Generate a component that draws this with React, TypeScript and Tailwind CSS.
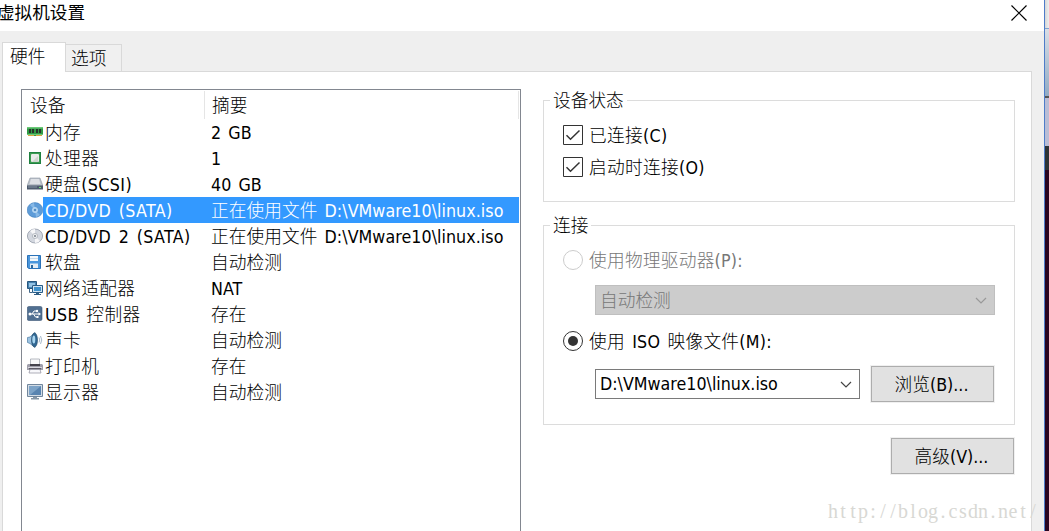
import React from "react";

const stack = "font-['DejaVu_Sans_Condensed','DejaVu_Sans','Noto_Sans_CJK_SC',sans-serif] font-light";

const icons: Record<string, React.ReactNode> = {
  memory: (
    <>
      <path d="M0 3h16v8h-1v1H1v-1H0z" fill="#2f9a45" />
      <path d="M0 3h16v1.500H0z" fill="#6cc878" />
      <path d="M2 5h2v4H2zM5 5h2v4H5zM9 5h2v4H9zM12 5h2v4h-2z" fill="#26332a" />
      <path d="M0 10h16v1H0z" fill="#6cc878" />
      <path d="M1 11h6v1H1zM9 11h6v1H9z" fill="#d9a441" />
    </>
  ),
  cpu: (
    <>
      <rect x="2" y="2" width="12" height="12" fill="#1f8140" />
      <rect x="3" y="3" width="10" height="10" fill="#3d9c52" />
      <rect x="4" y="4" width="8" height="8" rx="1" fill="#e9ebe9" />
      <path d="M11 6v6H5z" fill="#cfd4cf" />
    </>
  ),
  disk: (
    <>
      <path d="M3 2h10l3 8H0z" fill="#b9bfc8" stroke="#8f98a4" strokeWidth=".6" />
      <path d="M4 3h8l1.500 5h-11z" fill="#dde0e5" />
      <path d="M0 9.500h16v4H0z" fill="#4d5b6e" />
      <path d="M1 10.500h9v1H1z" fill="#8996a7" />
      <path d="M12 11h2v1h-2z" fill="#74df70" />
    </>
  ),
  discBlue: (
    <>
      <ellipse cx="8" cy="8" rx="7.900" ry="7.400" fill="#5e9cd8" stroke="#3979b8" strokeWidth=".5" />
      <path d="M8 8L3 3A8 7 0 0 1 7 1zM8 8l5 5A8 7 0 0 1 9 15z" fill="#86b8e6" />
      <circle cx="8" cy="8" r="2.600" fill="#a4cbee" stroke="#d3e7f7" strokeWidth=".6" />
      <circle cx="8" cy="8" r="1" fill="#3b79b2" />
    </>
  ),
  disc: (
    <>
      <ellipse cx="8" cy="8" rx="7.600" ry="7" fill="#d3d7df" stroke="#858e9c" strokeWidth=".7" />
      <path d="M8 8L3 3A8 7 0 0 1 8 1zM8 8l5 5A8 7 0 0 1 8 15z" fill="#f6f6f8" />
      <circle cx="8" cy="8" r="2.600" fill="#eceef1" stroke="#9ba1ab" strokeWidth=".6" />
      <circle cx="8" cy="8" r="1" fill="#777e88" />
    </>
  ),
  floppy: (
    <>
      <path d="M.5 1.500h13v13H2l-1.500-1z" fill="#4a96dc" stroke="#2b72b8" />
      <path d="M3 2h8v5H3z" fill="#f4f8fb" />
      <path d="M3 4h8v1H3z" fill="#c5d9ea" />
      <path d="M3 9.500h8V14H3z" fill="#e5edf4" />
      <path d="M4 11h2v3H4z" fill="#2867a0" />
    </>
  ),
  network: (
    <>
      <path d="M.5 1.500h9v7h-9z" fill="#4681af" stroke="#26567e" />
      <path d="M2 3h6v4H2z" fill="#94c3e4" />
      <path d="M2.500 8.500v4H5" fill="none" stroke="#426789" />
      <path d="M5 5h11v8H5z" fill="#f3f8fc" />
      <path d="M5.500 5.500h10v7h-10z" fill="#cfe3f2" stroke="#285c87" />
      <path d="M7 7h7v4H7z" fill="#3e91cc" />
      <path d="M9 13h3v1h2v1H7v-1h2z" fill="#315e83" />
    </>
  ),
  usb: (
    <>
      <rect x=".3" y=".5" width="14.700" height="14" rx="1.500" fill="#506f91" stroke="#3b5674" strokeWidth=".6" />
      <path d="M2 8h10M5 8l2-3h3M6.500 8l2 3h2" fill="none" stroke="#fff" strokeWidth="1" />
      <circle cx="3" cy="8" r="1.500" fill="#fff" />
      <circle cx="10" cy="5" r="1.200" fill="#fff" />
      <path d="M11.500 6.300L14 8l-2.500 1.700zM9.500 10h2v2h-2z" fill="#fff" />
    </>
  ),
  sound: (
    <>
      <path d="M.5 5.500L3 5l5-4.500v15L3 11.500l-2.500-1z" fill="#9cc3e2" stroke="#4b7ba3" strokeWidth=".7" />
      <ellipse cx="7.500" cy="8" rx="3" ry="7" fill="#326894" stroke="#214865" strokeWidth=".6" />
      <ellipse cx="6.800" cy="7.500" rx="1.500" ry="4" fill="#a9d6f0" />
      <path d="M12 5.500q1.500 2.500 0 5M13.500 4q2.500 4 0 8" fill="none" stroke="#8ea6bd" strokeWidth=".8" />
    </>
  ),
  printer: (
    <>
      <path d="M3.500 1h9v6h-9z" fill="#f8f8fa" stroke="#9a9da6" strokeWidth=".7" />
      <path d="M1 6h14l1 1v5H0V7z" fill="#a09fab" />
      <path d="M3 6h10v2H3z" fill="#45434d" />
      <path d="M1 9h14v1H1z" fill="#d9d8e0" />
      <path d="M2 10h12v1.500H2z" fill="#5c5a66" />
      <path d="M3 11.500h10l1 3.500H2z" fill="#f8f8fb" stroke="#8d8d9b" strokeWidth=".7" />
    </>
  ),
  monitor: (
    <>
      <path d="M.5.500h15v12H.5z" fill="#d3dce5" stroke="#71869c" />
      <path d="M2 2h12v9H2z" fill="#5984b0" />
      <path d="M2 2h12L3 11H2z" fill="#7da3c7" />
      <path d="M6 13h4v1h2v1.500H4V14h2z" fill="#8596a6" />
    </>
  ),
};

const devices = [
  { icon: "memory", name: "内存", summary: "2 GB" },
  { icon: "cpu", name: "处理器", summary: "1" },
  { icon: "disk", name: "硬盘(SCSI)", summary: "40 GB" },
  { icon: "discBlue", name: "CD/DVD (SATA)", summary: "正在使用文件 D:\\VMware10\\linux.iso", selected: true },
  { icon: "disc", name: "CD/DVD 2 (SATA)", summary: "正在使用文件 D:\\VMware10\\linux.iso" },
  { icon: "floppy", name: "软盘", summary: "自动检测" },
  { icon: "network", name: "网络适配器", summary: "NAT" },
  { icon: "usb", name: "USB 控制器", summary: "存在" },
  { icon: "sound", name: "声卡", summary: "自动检测" },
  { icon: "printer", name: "打印机", summary: "存在" },
  { icon: "monitor", name: "显示器", summary: "自动检测" },
];

function DeviceList() {
  return (
    <section className="h-[460px] w-[500px] shrink-0 border border-[#828790] bg-white">
      <div className="mt-px mr-px flex h-[28px] leading-[31px]">
        <div className="w-[183px] border-r border-[#e5e5e5] pl-[8px]">设备</div>
        <div className="flex-1 border-r border-[#e5e5e5] pl-[7px]">摘要</div>
      </div>
      {devices.map((d) => (
        <div key={d.name} className="mr-px flex h-[26px] items-center leading-[28px]">
          <svg className="ml-[5px] size-4 shrink-0" viewBox="0 0 16 16">{icons[d.icon]}</svg>
          <div className={d.selected ? "flex h-[26px] flex-1 bg-[#3399ff] text-white" : "flex h-[26px] flex-1"}>
            <div className="w-[168px] pl-[2px] tracking-[0.4px]">{d.name}</div>
            <div className="tracking-[0.05px]">{d.summary}</div>
          </div>
        </div>
      ))}
    </section>
  );
}

function Check({ label }: { label: string }) {
  return (
    <label className="flex h-8 items-center gap-[6px]">
      <svg className="size-5" viewBox="0 0 20 20" fill="none">
        <path d="M.5.5h19v19H.5z" fill="#fff" stroke="#333" />
        <path d="M3.500 10.200l4 4L16.500 5.500" stroke="#333" strokeWidth="1.500" />
      </svg>
      <span className="pt-[2px] tracking-[0.3px]">{label}</span>
    </label>
  );
}

function Radio({ label, checked = false }: { label: string; checked?: boolean }) {
  return (
    <label className={checked ? "flex h-[26px] items-center gap-[6px]" : "flex h-[26px] items-center gap-[6px] text-[#777]"}>
      <svg className="size-5" viewBox="0 0 20 20">
        <circle cx="10" cy="10" r="9.500" fill="#fff" stroke={checked ? "#333" : "#ccc"} />
        {checked && <circle cx="10" cy="10" r="5" fill="#333" />}
      </svg>
      <span className="pt-[2px] tracking-[0.25px]">{label}</span>
    </label>
  );
}

function Chevron({ color }: { color: string }) {
  return (
    <svg className="h-[7px] w-3" viewBox="0 0 12 7" fill="none">
      <path d="M1 1l5 5 5-5" stroke={color} strokeWidth="1.200" />
    </svg>
  );
}

function Group({ title, className, children }: { title: string; className: string; children: React.ReactNode }) {
  return (
    <section className={className}>
      <div className="-mt-[13px] ml-[6px] h-[26px] w-fit bg-white px-[3px] leading-[27px]">{title}</div>
      {children}
    </section>
  );
}

function Button({ children }: { children: React.ReactNode }) {
  return (
    <button className="h-[36px] w-[123px] shrink-0 border border-[#adadad] bg-[#e1e1e1] pt-[3px] pr-[2px] outline outline-[#f0f0f0]">
      {children}
    </button>
  );
}

export default function App() {
  return (
    <main className={`flex h-[531px] w-[1049px] overflow-hidden bg-[#efefef] text-[17.700px] whitespace-pre text-black [word-spacing:2px] ${stack}`}>
      <div className="flex h-full w-[1044px] flex-col">
        <header className="flex h-[31px] shrink-0 items-start justify-between bg-white pr-[17px]">
          <h1 className="-ml-[3px] text-[17.600px] leading-[26px] font-normal">虚拟机设置</h1>
          <svg className="mt-[5px] size-4" viewBox="0 0 16 16" fill="none">
            <path d="M.5.5l15 15M15.500.5l-15 15" stroke="#000" strokeWidth="1.200" />
          </svg>
        </header>
        <nav className="flex h-[40px] shrink-0 items-end pl-[2px]">
          <div className="z-10 -mb-px h-[30px] w-[64px] border border-b-0 border-[#d9d9d9] bg-white pl-[7px] leading-[28px]">硬件</div>
          <div className="-ml-px h-[27px] w-[57px] border border-b-0 border-[#d9d9d9] bg-[#f0f0f0] pl-[5px] leading-[28px]">选项</div>
        </nav>
        <div className="ml-[2px] flex h-[480px] w-[1030px] shrink-0 border border-[#d9d9d9] bg-white pt-[17px] pl-[18px]">
          <DeviceList />
          <div className="ml-[22px] flex w-[472px] flex-col pt-[11px]">
            <Group title="设备状态" className="h-[102px] w-[472px] border border-[#dcdcdc]">
              <div className="pt-[5px] pl-[19px]">
                <Check label="已连接(C)" />
                <Check label="启动时连接(O)" />
              </div>
            </Group>
            <Group title="连接" className="mt-[23px] h-[200px] w-[472px] border border-[#dcdcdc]">
              <div className="pt-[8px] pl-[19px]">
                <Radio label="使用物理驱动器(P):" />
                <div className="mt-[12px] ml-[32px] flex h-[30px] w-[400px] items-center justify-between border border-[#bfbfbf] bg-[#ccc] pr-[7px] pl-[4px] text-[#777]">
                  <span className="pt-[2px]">自动检测</span><Chevron color="#999" />
                </div>
                <div className="mt-[13px]"><Radio checked label="使用 ISO 映像文件(M):" /></div>
                <div className="mt-[12px] ml-[32px] flex items-center gap-[11px]">
                  <div className="flex h-[30px] w-[265px] items-center justify-between border border-[#7a7a7a] bg-white pr-[7px] pl-[4px]">
                    D:\VMware10\linux.iso<Chevron color="#444" />
                  </div>
                  <Button>浏览(B)...</Button>
                </div>
              </div>
            </Group>
            <div className="mt-[13px] flex justify-end pr-px"><Button>高级(V)...</Button></div>
          </div>
        </div>
      </div>
      <aside className="flex w-[5px] flex-col border-l border-[#4e7cc9]">
        <div className="h-[28px] bg-gradient-to-r from-[#d6d6d6] to-[#eee]" />
        <div className="h-px bg-[#7fa4d1]" />
        <div className="h-[67px] bg-gradient-to-b from-[#d9dee5] to-[#91abc4]" />
        <div className="h-[2px] bg-[#555]" />
        <div className="h-[48px] bg-[#b9bdd5]" />
        <div className="h-[24px] bg-[#2d3436]" />
        <div className="flex-1 bg-[#2a0521]" />
      </aside>
      <div className="absolute top-[498px] left-[828px] flex font-['Liberation_Serif',serif] text-[20px] leading-[26px] text-[#d8d8d4]">
        {Array.from("http://blog.csdn.net/").map((c, i) => (
          <span key={i} className="w-[10px] text-center">{c}</span>
        ))}
      </div>
    </main>
  );
}
